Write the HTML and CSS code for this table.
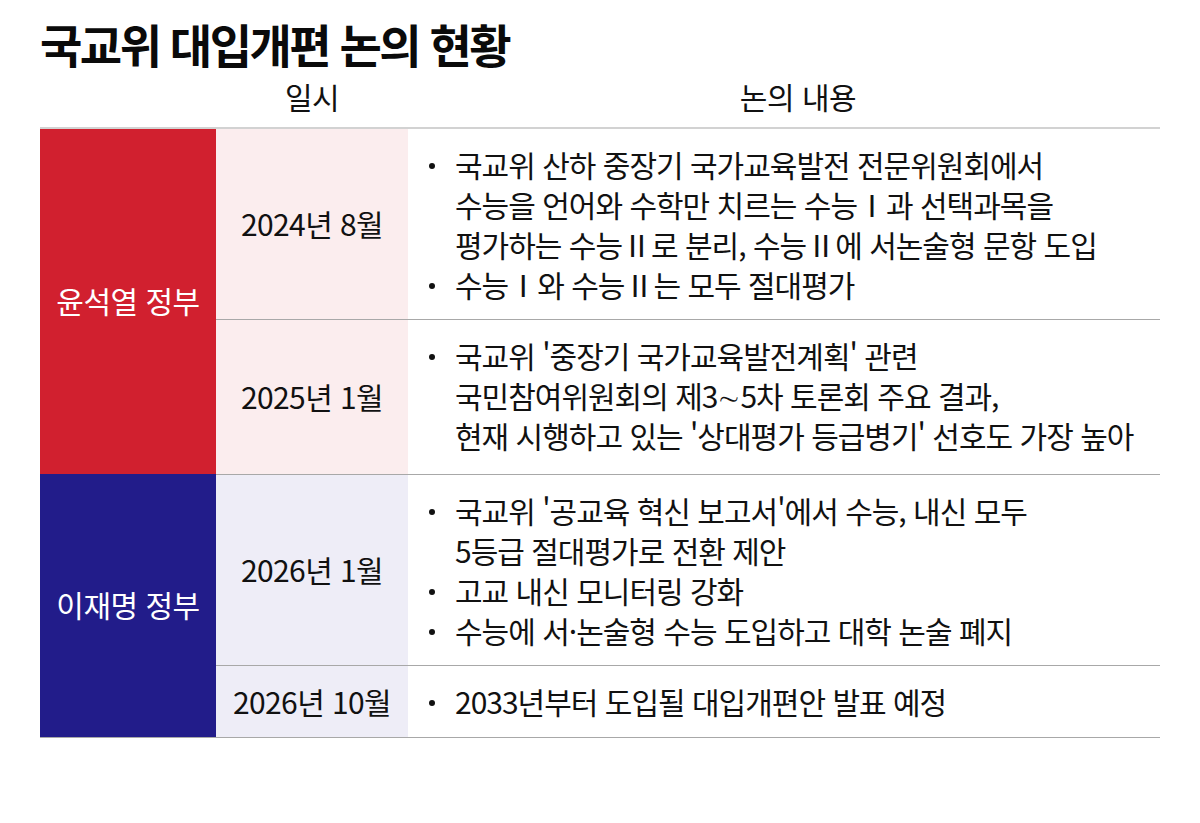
FILE: index.html
```html
<!DOCTYPE html>
<html lang="ko">
<head>
<meta charset="utf-8">
<title>국교위 대입개편 논의 현황</title>
<link rel="stylesheet" href="styles.css">
</head>
<body>
<div class="page">
  <h1 class="title">국교위 대입개편 논의 현황</h1>
  <div class="table">
    <div class="head">
      <div class="hcell"></div>
      <div class="hcell">일시</div>
      <div class="hcell hcell--content">논의 내용</div>
    </div>

    <section class="group group--red">
      <div class="gov">윤석열 정부</div>
      <div class="rows">
        <div class="row">
          <div class="date">2024년 8월</div>
          <ul class="content">
            <li><span>국교위 산하 중장기 국가교육발전 전문위원회에서<br>수능을 언어와 수학만 치르는 수능Ⅰ과 선택과목을<br>평가하는 수능Ⅱ로 분리, 수능Ⅱ에 서논술형 문항 도입</span></li>
            <li><span>수능Ⅰ와 수능Ⅱ는 모두 절대평가</span></li>
          </ul>
        </div>
        <div class="row row--tall">
          <div class="date">2025년 1월</div>
          <ul class="content">
            <li><span>국교위 '중장기 국가교육발전계획' 관련<br>국민참여위원회의 제3∼5차 토론회 주요 결과,<br>현재 시행하고 있는 '상대평가 등급병기' 선호도 가장 높아</span></li>
          </ul>
        </div>
      </div>
    </section>

    <section class="group group--blue">
      <div class="gov">이재명 정부</div>
      <div class="rows">
        <div class="row">
          <div class="date">2026년 1월</div>
          <ul class="content">
            <li><span>국교위 '공교육 혁신 보고서'에서 수능, 내신 모두<br>5등급 절대평가로 전환 제안</span></li>
            <li><span>고교 내신 모니터링 강화</span></li>
            <li><span>수능에 서·논술형 수능 도입하고 대학 논술 폐지</span></li>
          </ul>
        </div>
        <div class="row row--last">
          <div class="date">2026년 10월</div>
          <ul class="content">
            <li><span>2033년부터 도입될 대입개편안 발표 예정</span></li>
          </ul>
        </div>
      </div>
    </section>
  </div>
</div>
</body>
</html>
```

FILE: styles.css
```css
* { box-sizing: border-box; }

html, body {
  margin: 0;
  padding: 0;
  background: #ffffff;
}

body {
  font-family: "Noto Sans CJK KR", "Noto Sans", sans-serif;
  color: #111111;
}

.page {
  width: 1200px;
  padding: 17px 40px 0 40px;
}

.title {
  margin: 0;
  font-size: 46px;
  line-height: 52px;
  font-weight: 700;
  letter-spacing: -2.5px;
  color: #0a0a0a;
}

.table {
  width: 1120px;
  border-bottom: 1px solid #a8a8a8;
}

.head {
  display: grid;
  grid-template-columns: 176px 192px 1fr;
  height: 60px;
  border-bottom: 2px solid #d2d2d2;
}

.hcell {
  display: flex;
  align-items: center;
  justify-content: center;
  font-size: 30px;
  letter-spacing: -0.5px;
  font-weight: 400;
  padding-bottom: 4px;
}

.hcell--content {
  padding-left: 28px;
}

.group {
  display: grid;
  grid-template-columns: 176px 1fr;
}

.gov {
  display: flex;
  align-items: center;
  justify-content: center;
  color: #ffffff;
  font-size: 30px;
  letter-spacing: -0.5px;
  padding-bottom: 4px;
}

.group--red .gov { background: #d1202f; }
.group--blue .gov { background: #221c8a; }

.group--red .date { background: #fbedee; }
.group--blue .date { background: #eeedf7; }

.group + .group .rows {
  border-top: 1px solid #a8a8a8;
}

.row {
  display: grid;
  grid-template-columns: 192px 1fr;
}

.row + .row {
  border-top: 1px solid #a8a8a8;
}

.date {
  display: flex;
  align-items: center;
  justify-content: center;
  font-size: 30px;
  letter-spacing: -0.6px;
  padding-bottom: 2px;
}

.content {
  list-style: none;
  margin: 0;
  padding: 15px 0 15px 21px;
  font-size: 30px;
  line-height: 40px;
  letter-spacing: -1px;
  white-space: nowrap;
}

.row--tall .content {
  padding-bottom: 19px;
}

.row--last .content {
  padding-bottom: 16px;
}

.content li {
  display: flex;
  align-items: flex-start;
}

.content li::before {
  content: "";
  flex: none;
  width: 6px;
  height: 6px;
  border-radius: 50%;
  background: #111111;
  margin: 19px 20px 0 0;
}
```
